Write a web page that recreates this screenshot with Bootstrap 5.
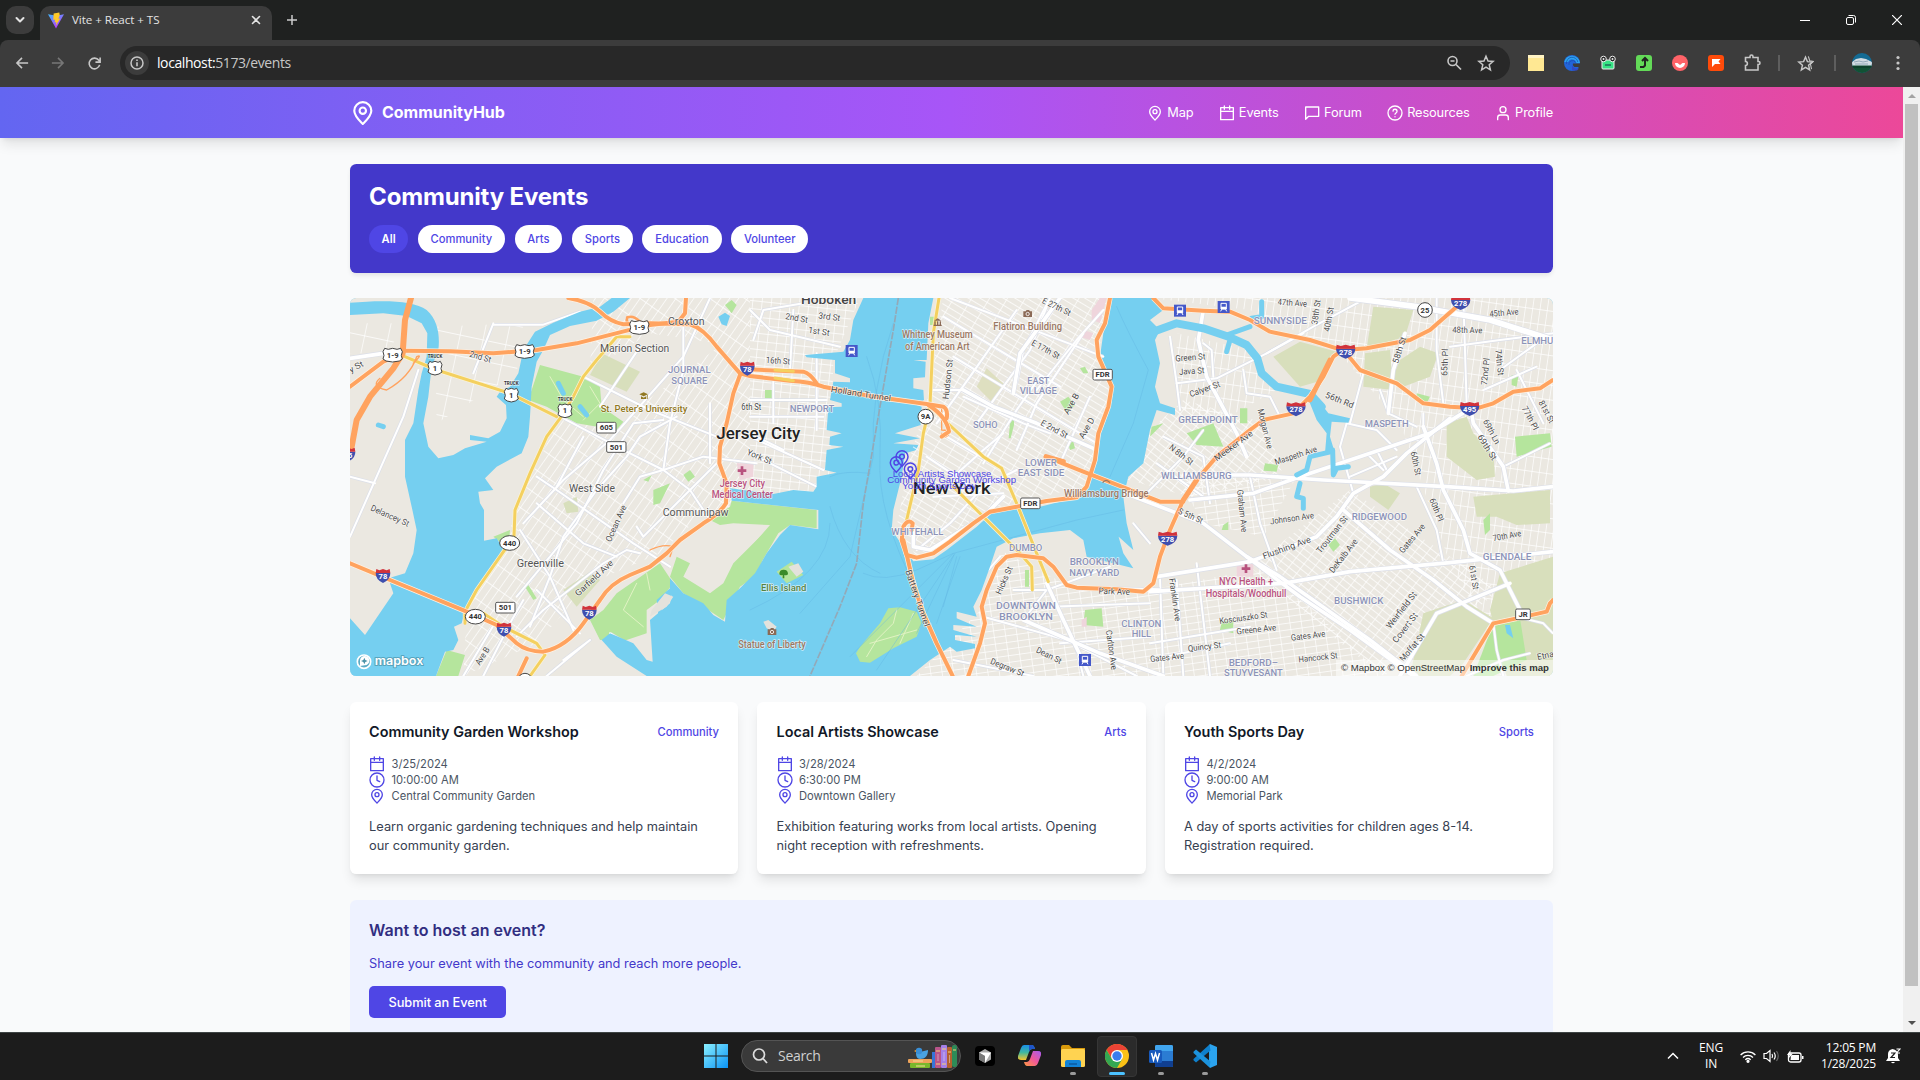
<!DOCTYPE html>
<html lang="en">
<head>
<meta charset="utf-8">
<meta name="viewport" content="width=device-width, initial-scale=1">
<title>Vite + React + TS</title>
<link href="https://cdn.jsdelivr.net/npm/bootstrap@5.3.0/dist/css/bootstrap.min.css" rel="stylesheet">
<style>
  html, body { height: 100%; overflow: hidden; }
  body { font-family: Inter, "Liberation Sans", sans-serif; font-size: 12.8px; background: #1c1c1c; }
  svg { display: block; flex: none; }
  .ln { fill: none; stroke: currentColor; stroke-width: 2; stroke-linecap: round; stroke-linejoin: round; }
  .ln-thin { stroke-width: 1.6; }
  .ui { font-family: "Open Sans", "Noto Sans", sans-serif; }

  /* browser chrome */
  .tabstrip { height: 40px; background: #1f2120; color: #e3e3e3; padding-left: 6px; }
  .tab-menu { width: 28px; height: 28px; border-radius: 10px; background: #3c3c3c; margin-top: 6px; }
  .tab-item { width: 232px; height: 34px; margin: 6px 0 0 6px; padding: 0 10px 6px 8px; background: #3c3c3c; border-radius: 10px 10px 0 0; font-size: 12px; letter-spacing: -.02px; }
  .tab-item span { letter-spacing: -.05px; font-size: 11.6px; }
  .win-btn { width: 46px; height: 40px; }
  .toolbar { height: 47px; background: #3c3c3c; color: #c7c7c7; padding: 6px 4px 7px 4px; border-radius: 8px 8px 0 0; }
  .tool { width: 36px; height: 34px; }
  .omnibox { width: 1390px; height: 34px; margin-left: 8px; background: #282828; border-radius: 17px; font-size: 14px; letter-spacing: -.41px; padding: 0 6px 0 5px; }
  .url { padding-bottom: 2px; }
  .site-info { width: 24px; height: 24px; border-radius: 50%; background: #3c3c3c; margin-right: 8px; }
  .sep { width: 2px; height: 16px; background: #5e5e5e; }

  /* page */
  .viewport { height: 945px; }
  .page { width: 1903px; height: 945px; overflow: hidden; background: #f9fafb; }
  .scrollbar { width: 17px; background: #f0f0f0; }
  .thumb { width: 13px; height: 882px; background: #c1c1c1; }
  .wrap { width: 1203.2px; margin: 0 auto; }
  .topnav { height: 51.2px; color: #fff; background: linear-gradient(to right, #6366f1, #a855f7, #ec4899); box-shadow: 0 8px 12px -2px rgba(0,0,0,.1), 0 3px 5px -3px rgba(0,0,0,.1); position: relative; }
  .brand { font-size: 16px; font-weight: 700; gap: 6.4px; }
  .brand span { margin-top: -2px; }
  .links { gap: 25.6px; }
  .links a { color: #fff; text-decoration: none; gap: 3.8px; font-size: 12.8px; letter-spacing: -.12px; }
  .main-col { padding-top: 25.6px; gap: 25.6px; }
  .banner { background: #4338ca; border-radius: 6.4px; padding: 19.2px; height: 108.8px; box-shadow: 0 3px 5px -1px rgba(0,0,0,.1); }
  .banner h1 { font-size: 24px; line-height: 28.8px; font-weight: 700; color: #fff; margin: 0 0 13.6px; letter-spacing: -.17px; }
  .pills { gap: 9.6px; }
  .pill { font-size: 11.2px; line-height: 15.2px; letter-spacing: .01px; padding: 6.4px 12.8px; border-radius: 20px; background: #fff; color: #4f46e5; border: 0; font-weight: 500; }
  .pill.on { background: #4f46e5; color: #fff; font-weight: 600; width: 39px; padding: 6.4px 0; }
  .map { height: 378px; border-radius: 6.4px; overflow: hidden; background: #75cff0; }
  .events { gap: 19.2px; }
  .event { flex: 1 1 0; background: #fff; border-radius: 6.4px; padding: 19.2px; height: 172.2px; box-shadow: 0 8px 12px -2px rgba(0,0,0,.1), 0 3px 5px -3px rgba(0,0,0,.1); }
  .event h2 { font-size: 14.4px; line-height: 22.4px; font-weight: 600; color: #111827; margin: 0; letter-spacing: -.01px; }
  .tag { font-size: 11.2px; font-weight: 500; color: #4f46e5; letter-spacing: -.02px; }
  .facts { color: #4b5563; font-size: 11.2px; line-height: 16px; margin: 12.600px 0 13px; }
  .facts svg { color: #4f46e5; margin-right: 6.4px; }
  .event p { color: #374151; font-size: 12.8px; line-height: 19.2px; margin: 0; }
  .cta { background: #eef2ff; border-radius: 6.4px; padding: 19.2px; height: 200px; }
  .cta h2 { font-size: 16px; line-height: 23px; font-weight: 600; color: #312e81; margin: 0 0 10.8px; }
  .cta p { font-size: 12.8px; line-height: 22px; color: #4338ca; margin: 0 0 11.4px; }
  .cta button { background: #4f46e5; color: #fff; border: 0; border-radius: 5px; font-size: 12.8px; height: 32px; width: 137px; padding: 1px 0 0; font-weight: 500; letter-spacing: -.05px; }

  /* map text */
  .map text { text-anchor: middle; paint-order: stroke; stroke-linejoin: round; stroke: #fff; stroke-opacity: .7; stroke-width: 4; font-family: Roboto, sans-serif; }
  .map .m-city { fill: #222; font-weight: 500; font-size: 51px; }
  .map .m-town { fill: #555; font-size: 31px; }
  .map .m-hood { fill: #8c93b8; font-size: 29px; font-weight: 500; }
  .map .m-road { fill: #4c4c4c; font-size: 26px; }
  .map .m-tiny { fill: #333; font-size: 17px; font-weight: 700; }
  .map .m-poi { fill: #9a7763; font-size: 30px; font-weight: 500; }
  .map .m-med { fill: #b8527e; font-size: 30px; font-weight: 500; }
  .map .m-edu { fill: #917822; font-size: 29px; font-weight: 500; }
  .map .m-isle { fill: #568142; font-size: 29px; font-weight: 500; }
  .map .m-ev { fill: #4f46e5; font-size: 28px; font-family: "Liberation Sans", sans-serif; stroke: none; }
  .map .m-shield { stroke: none; font-size: 23px; font-weight: 700; fill: #333; }
  .map .m-attr { stroke: none; font-size: 28px; fill: #333; font-family: "Liberation Sans", sans-serif; }

  /* taskbar */
  .taskbar { height: 48px; background: #1c1c1c; border-top: 1px solid #3e4444; color: #fff; position: relative; padding-left: 694px; }
  .t-app { width: 44px; height: 47px; position: relative; }
  .t-app.open::after { content: ""; position: absolute; bottom: 5px; left: 19px; width: 6px; height: 3px; border-radius: 2px; background: #9a9a9a; }
  .t-app.current::after { left: 14px; width: 16px; background: #4cc2ff; }
  .t-app.current::before { content: ""; position: absolute; left: 2px; top: 3px; width: 40px; height: 41px; border-radius: 4px; background: #2b2b2b; border: 1px solid #363636; }
  .t-app svg { position: relative; top: -1px; }
  .t-search { width: 220px; height: 32px; margin: 0 14px 1px 3px; border-radius: 16px; background: #3a3a3a; border: 1px solid #545454; font-size: 14px; letter-spacing: -.3px; color: #d0d0d0; padding: 0 3px 0 10px; }
  .t-search span { padding-bottom: 1px; }
  .tray { margin-left: auto; font-size: 12px; line-height: 16px; letter-spacing: -.2px; padding: 0 19px 1px 0; }
</style>
<script src="https://cdn.jsdelivr.net/npm/bootstrap@5.3.0/dist/js/bootstrap.bundle.min.js"></script>
</head>
<body class="d-flex flex-column">

<svg width="0" height="0" class="position-absolute">
  <defs>
    <symbol id="pin" viewBox="0 0 24 24"><path class="ln" d="M12 22.5c3.5-3.6 8-7.700 8-12.500a8 8 0 1 0-16 0c0 4.800 4.500 8.900 8 12.500z"/><circle class="ln" cx="12" cy="10" r="3"/></symbol>
    <symbol id="cal" viewBox="0 0 24 24"><path class="ln" d="M2.500 4h19v18h-19zM2.500 9.500h19M8 1.500v5M16 1.500v5"/></symbol>
    <symbol id="clock" viewBox="0 0 24 24"><circle class="ln" cx="12" cy="12" r="10.500"/><path class="ln" d="M12 6v6.500l4 2"/></symbol>
    <symbol id="chat" viewBox="0 0 24 24"><path class="ln" d="M22 17H7l-4.500 4.500V3H22z"/></symbol>
    <symbol id="help" viewBox="0 0 24 24"><circle class="ln" cx="12" cy="12" r="10.500"/><path class="ln" d="M9 9.200a3 3 0 0 1 6 .4c0 2-3 2.500-3 4.200M12 17.500v.1"/></symbol>
    <symbol id="user" viewBox="0 0 24 24"><circle class="ln" cx="12" cy="7" r="4.500"/><path class="ln" d="M4 22v-3a4 4 0 0 1 4-4h8a4 4 0 0 1 4 4v3"/></symbol>
    <symbol id="star" viewBox="0 0 24 24"><path d="M12 3l2.700 6.300 6.800.6-5.200 4.500 1.600 6.700L12 17.500l-5.900 3.600 1.600-6.700-5.200-4.500 6.800-.6z" fill="none" stroke="currentColor" stroke-width="2"/></symbol>
  </defs>
</svg>

<div class="tabstrip d-flex ui">
  <div class="tab-menu d-flex align-items-center justify-content-center"><svg width="10" height="10" viewBox="0 0 10 10"><path class="ln" d="M1.500 3L5 6.500 8.500 3"/></svg></div>
  <div class="tab-item d-flex align-items-center">
    <svg width="16" height="18" viewBox="0 0 17 18"><defs><linearGradient id="vg" x1="0" y1="0" x2=".6" y2="1"><stop stop-color="#41b8ff"/><stop offset="1" stop-color="#bd34fe"/></linearGradient></defs><path d="M0 3l8.500 15L17 3l-8 1.500z" fill="url(#vg)"/><path d="M12 1L6 2.200 5.600 9l2-.4-.5 3 1.800-.6-.6 4L13 7.500l-2 .3L12.500 4z" fill="#ffc928"/></svg>
    <span class="ms-2">Vite + React + TS</span>
    <svg class="ms-auto" width="12" height="12" viewBox="0 0 12 12"><path class="ln ln-thin" d="M2.500 2.500l7 7M9.500 2.500l-7 7"/></svg>
  </div>
  <div class="d-flex align-items-center justify-content-center" style="width:40px"><svg width="12" height="12" viewBox="0 0 12 12"><path d="M6 1v10M1 6h10" stroke="#ccc" stroke-width="1.500"/></svg></div>
  <div class="ms-auto d-flex">
    <div class="win-btn d-flex align-items-center justify-content-center"><svg width="10" height="10"><path d="M0 5.500h10" stroke="#fff"/></svg></div>
    <div class="win-btn d-flex align-items-center justify-content-center"><svg width="10" height="10"><rect x=".5" y="2.500" width="7" height="7" rx="1.500" fill="none" stroke="#fff"/><path d="M2.500.500h5a2 2 0 0 1 2 2v5" fill="none" stroke="#fff"/></svg></div>
    <div class="win-btn d-flex align-items-center justify-content-center"><svg width="10" height="10"><path d="M0 0l10 10M10 0L0 10" stroke="#fff" stroke-width="1.200"/></svg></div>
  </div>
</div>
<div style="background:#1f2120">
<div class="toolbar d-flex align-items-center ui">
  <div class="tool d-flex align-items-center justify-content-center"><svg width="14" height="14" viewBox="0 0 16 16"><path d="M15 8H2.500M8 2.200L2.200 8 8 13.800" fill="none" stroke="currentColor" stroke-width="1.800"/></svg></div>
  <div class="tool d-flex align-items-center justify-content-center" style="color:#777"><svg width="14" height="14" viewBox="0 0 16 16"><path d="M1 8h12.500M8 2.200L13.800 8 8 13.800" fill="none" stroke="currentColor" stroke-width="1.800"/></svg></div>
  <div class="tool d-flex align-items-center justify-content-center"><svg width="15" height="15" viewBox="0 0 16 16"><path d="M13.500 9.500A5.700 5.700 0 1 1 12.600 4.600L14 6M14 1.500V6.500H9" fill="none" stroke="currentColor" stroke-width="1.700"/></svg></div>
  <div class="omnibox d-flex align-items-center">
    <div class="site-info d-flex align-items-center justify-content-center"><svg width="14" height="14" viewBox="0 0 14 14"><circle cx="7" cy="7" r="6" fill="none" stroke="currentColor" stroke-width="1.500"/><path d="M7 6.200v4M7 3.500v1.500" stroke="currentColor" stroke-width="1.600"/></svg></div>
    <span class="url"><span class="text-white">localhost:</span>5173/events</span>
    <svg class="ms-auto" width="16" height="16" viewBox="0 0 16 16"><circle cx="6.500" cy="6" r="4.500" fill="none" stroke="currentColor" stroke-width="1.600"/><path d="M10 9.500l5 5M4.500 6h4" stroke="currentColor" stroke-width="1.700"/></svg>
    <svg width="18" height="18" style="margin:0 9px 0 15px"><use href="#star"/></svg>
  </div>
  <div class="d-flex align-items-center" style="margin-left:8px">
    <div class="tool d-flex align-items-center justify-content-center"><svg width="16" height="16"><path d="M0 0h16v16H0z" fill="#ffe893"/><path d="M0 0h16v3H0z" fill="#fff3c4"/></svg></div>
    <div class="tool d-flex align-items-center justify-content-center"><svg width="16" height="16" viewBox="0 0 16 16"><circle cx="8" cy="8" r="8" fill="#2364d8"/><path d="M.2 7A8 8 0 0 1 16 8h-3.500A4.500 4.500 0 0 0 4 7z" fill="#2ba5ee"/><path d="M2.500 9A5.700 5.700 0 0 1 13.800 7M5 10a3.500 3.500 0 0 1 6.500-2.500" fill="none" stroke="#1c4fb4" stroke-width=".8"/><path d="M9 8.500h7.500v3.500H10.500Q8.500 11 9 8.500z" fill="#3c3c3c"/><path d="M8 8.500q0 4 4 5h3l-2 2H8z" fill="#3349c8"/></svg></div>
    <div class="tool d-flex align-items-center justify-content-center"><svg width="16" height="16" viewBox="0 0 16 16"><rect x="2" y="5" width="12" height="9" rx="1" fill="#36e283" stroke="#eee"/><circle cx="3.500" cy="4" r="2.800" fill="#222" stroke="#eee"/><circle cx="12.500" cy="4" r="2.800" fill="#222" stroke="#eee"/><circle cx="3.500" cy="4" r="1" fill="#eee"/><circle cx="12.500" cy="4" r="1" fill="#eee"/><path d="M5 10h6" stroke="#134"/></svg></div>
    <div class="tool d-flex align-items-center justify-content-center"><svg width="16" height="16" viewBox="0 0 16 16"><rect width="16" height="16" rx="3" fill="#63da58"/><path d="M4 12h3.500l1.500-1.500V4M6 6l3-3 3 3" fill="none" stroke="#222" stroke-width="2"/></svg></div>
    <div class="tool d-flex align-items-center justify-content-center"><svg width="16" height="16"><circle cx="8" cy="8" r="8" fill="#ff6368"/><path d="M3 8h2.500l2.500 2 2.500-2H13a5 5 0 0 1-10 0z" fill="#fff"/></svg></div>
    <div class="tool d-flex align-items-center justify-content-center"><svg width="16" height="16"><rect width="16" height="16" rx="3" fill="#ff4b0a"/><path d="M4 4h8.500l-2 2.500 2 2.500H7l-3 3z" fill="#fff"/></svg></div>
    <div class="tool d-flex align-items-center justify-content-center"><svg width="18" height="18" viewBox="0 0 18 18"><path d="M2.500 3.500H7V2.500a1.500 1.500 0 0 1 3 0v1h5v4h.5a1.500 1.500 0 0 1 0 3H15V16H2.500v-4.500c2.500 0 2.500-4 0-4z" fill="none" stroke="currentColor" stroke-width="1.600"/></svg></div>
    <div class="sep" style="margin-left:8px"></div>
    <div class="d-flex" style="width:54px;padding-left:17px"><svg width="17" height="17" viewBox="0 0 24 24"><use href="#star"/><path d="M16 2l2 6 5 1-4 4 1.500 7" fill="none" stroke="currentColor" stroke-width="1.500"/></svg></div>
    <div class="sep"></div>
    <svg width="20" height="20" style="margin-left:16px"><defs><clipPath id="av"><circle cx="10" cy="10" r="10"/></clipPath></defs><g clip-path="url(#av)"><path d="M0 0h20v20H0z" fill="#146b94"/><path d="M0 9l4-3 5-1 5 1 6 3v4H0z" fill="#d3dde3"/><path d="M2 9l5-1 4 1 5-1M3 11h13" stroke="#94aab8" fill="none"/><path d="M0 12.500h20V20H0z" fill="#125234"/><path d="M0 14h20" stroke="#0b3424"/></g></svg>
    <svg width="4" height="16" style="margin-left:24px" fill="currentColor"><circle cx="2" cy="2.500" r="1.600"/><circle cx="2" cy="8" r="1.600"/><circle cx="2" cy="13.500" r="1.600"/></svg>
  </div>
</div>
</div>

<div class="viewport d-flex">
  <div class="page">
    <nav class="topnav">
      <div class="wrap h-100 d-flex align-items-center justify-content-between">
        <div class="brand d-flex align-items-center"><svg width="25.600" height="25.600"><use href="#pin"/></svg><span>CommunityHub</span></div>
        <div class="links d-flex">
          <a href="#" class="d-flex align-items-center"><svg width="16" height="16"><use href="#pin"/></svg>Map</a>
          <a href="#" class="d-flex align-items-center"><svg width="16" height="16"><use href="#cal"/></svg>Events</a>
          <a href="#" class="d-flex align-items-center"><svg width="16" height="16"><use href="#chat"/></svg>Forum</a>
          <a href="#" class="d-flex align-items-center"><svg width="16" height="16"><use href="#help"/></svg>Resources</a>
          <a href="#" class="d-flex align-items-center"><svg width="16" height="16"><use href="#user"/></svg>Profile</a>
        </div>
      </div>
    </nav>
    <main class="wrap main-col d-flex flex-column">
      <section class="banner">
        <h1>Community Events</h1>
        <div class="pills d-flex">
          <button class="pill on">All</button><button class="pill">Community</button><button class="pill">Arts</button><button class="pill">Sports</button><button class="pill">Education</button><button class="pill">Volunteer</button>
        </div>
      </section>
      <section class="map">
        <svg id="citymap" width="1203.200" height="378" viewBox="0 24 3609.600 1134" preserveAspectRatio="none"></svg>
      </section>
      <section class="events d-flex">
        <article class="event">
          <div class="d-flex justify-content-between align-items-center"><h2>Community Garden Workshop</h2><span class="tag">Community</span></div>
          <div class="facts">
            <div class="d-flex"><svg width="16" height="16"><use href="#cal"/></svg>3/25/2024</div>
            <div class="d-flex"><svg width="16" height="16"><use href="#clock"/></svg>10:00:00 AM</div>
            <div class="d-flex"><svg width="16" height="16"><use href="#pin"/></svg>Central Community Garden</div>
          </div>
          <p>Learn organic gardening techniques and help maintain our community garden.</p>
        </article>
        <article class="event">
          <div class="d-flex justify-content-between align-items-center"><h2>Local Artists Showcase</h2><span class="tag">Arts</span></div>
          <div class="facts">
            <div class="d-flex"><svg width="16" height="16"><use href="#cal"/></svg>3/28/2024</div>
            <div class="d-flex"><svg width="16" height="16"><use href="#clock"/></svg>6:30:00 PM</div>
            <div class="d-flex"><svg width="16" height="16"><use href="#pin"/></svg>Downtown Gallery</div>
          </div>
          <p>Exhibition featuring works from local artists. Opening night reception with refreshments.</p>
        </article>
        <article class="event">
          <div class="d-flex justify-content-between align-items-center"><h2>Youth Sports Day</h2><span class="tag">Sports</span></div>
          <div class="facts">
            <div class="d-flex"><svg width="16" height="16"><use href="#cal"/></svg>4/2/2024</div>
            <div class="d-flex"><svg width="16" height="16"><use href="#clock"/></svg>9:00:00 AM</div>
            <div class="d-flex"><svg width="16" height="16"><use href="#pin"/></svg>Memorial Park</div>
          </div>
          <p>A day of sports activities for children ages 8-14. Registration required.</p>
        </article>
      </section>
      <section class="cta">
        <h2>Want to host an event?</h2>
        <p>Share your event with the community and reach more people.</p>
        <button>Submit an Event</button>
      </section>
    </main>
  </div>
  <div class="scrollbar d-flex flex-column align-items-center">
    <svg width="17" height="17"><path d="M5 11h8L9 7z" fill="#a3a3a3"/></svg>
    <div class="thumb"></div>
    <svg class="mt-auto" width="17" height="17"><path d="M5 6h8L9 10z" fill="#505050"/></svg>
  </div>
</div>

<div class="taskbar d-flex align-items-center ui">
  <div class="t-app d-flex align-items-center justify-content-center"><svg width="24" height="24" viewBox="0 0 24 24"><defs><linearGradient id="wg" x1="0" y1="0" x2="1" y2="1"><stop stop-color="#8af0ff"/><stop offset="1" stop-color="#0a93f5"/></linearGradient></defs><path d="M0 0h11.500v11.500H0zM12.500 0H24v11.500H12.500zM0 12.500h11.500V24H0zM12.500 12.500H24V24H12.500z" fill="url(#wg)"/></svg></div>
  <div class="t-search d-flex align-items-center">
    <svg width="16" height="16" viewBox="0 0 16 16"><circle cx="7" cy="6.500" r="5.500" fill="none" stroke="#ddd" stroke-width="1.700"/><path d="M11 10.500l4 4.500" stroke="#ddd" stroke-width="1.800"/></svg>
    <span style="margin-left:10px">Search</span>
    <svg class="ms-auto" width="49" height="24" viewBox="0 0 49 24"><rect x="0" y="15" width="24" height="4" rx="1" fill="#efa45a"/><rect x="2" y="19" width="20" height="5" rx="1" fill="#7ab82c"/><path d="M5 17h10M8 22h9" stroke="#f9dd9a"/><path d="M8 9l4-1 8-2c0 6-3 9-8 9-3 0-4-3-4-6z" fill="#4aa3e0"/><circle cx="11" cy="7" r="3.200" fill="#3a8fd6"/><path d="M8 6l-2 1 2 1z" fill="#f4a030"/><rect x="24" y="8" width="3" height="16" fill="#3575d8"/><rect x="27" y="3" width="6" height="21" rx="1" fill="#b9558a"/><rect x="33" y="1" width="6" height="23" rx="1" fill="#a480e8"/><rect x="39" y="3" width="5" height="21" rx="1" fill="#b5602f"/><rect x="44" y="1" width="5" height="22" rx="2" fill="#2e8b57"/><path d="M28 7h4M34 5h4M40 8h3M28 20h4M34 20h4M45 6h3" stroke="#f5d276"/><path d="M30 10v7M36 8v9M41.500 11v8" stroke="#fff" stroke-opacity=".4"/></svg>
  </div>
  <div class="d-flex">
  <div class="t-app d-flex align-items-center justify-content-center" style="width:20px"><svg width="20" height="20" viewBox="0 0 20 20"><rect width="20" height="20" rx="4" fill="#000"/><path d="M10 3l6 3.500v7L10 17l-6-3.500v-7z" fill="#aaa"/><path d="M4 6.500h12L10 17V10z" fill="#fff"/><path d="M4 6.500L10 10v7l-6-3.500z" fill="#777"/></svg></div>
  <div class="t-app d-flex align-items-center justify-content-center" style="margin-left:12px"><svg width="23" height="21" viewBox="0 0 23 21"><defs><linearGradient id="c1" x1="0" y1="0" x2="0" y2="1"><stop stop-color="#1a8fe8"/><stop offset=".5" stop-color="#3fb8a0"/><stop offset="1" stop-color="#f7c52b"/></linearGradient><linearGradient id="c2" x1="1" y1="0" x2="0" y2="1"><stop stop-color="#a65bf0"/><stop offset=".5" stop-color="#f0579a"/><stop offset="1" stop-color="#ff9b3d"/></linearGradient></defs><path d="M6 0h8q2 0 3 4h-3q-2 0-3 3L8 15H3q-4 0-3-4L3 3q1-3 3-3z" fill="url(#c1)"/><path d="M11 0h3q2 0 3 4h-3q-2 0-3 3z" fill="#1f55c8"/><path d="M17 21H9q-2 0-3-4h3q2 0 3-3l3-8h5q4 0 3 4l-3 8q-1 3-3 3z" fill="url(#c2)"/></svg></div>
  <div class="t-app open d-flex align-items-center justify-content-center"><svg width="24" height="22" viewBox="0 0 24 22"><path d="M0 2q0-2 2-2h6l3 3h13v6H0z" fill="#d99a0b"/><rect y="4" width="24" height="18" rx="1.500" fill="#ffd351"/><path d="M4 22v-5q0-2 2-2h12q2 0 2 2v5z" fill="#1283d6"/><path d="M8 19h8" stroke="#0c5aa0" stroke-width="1.500"/></svg></div>
  <div class="t-app open current d-flex align-items-center justify-content-center"><svg width="24" height="24" viewBox="0 0 24 24"><circle cx="12" cy="12" r="12" fill="#fbc116"/><path d="M1.600 6A12 12 0 0 1 22.400 6H12L7 15z" fill="#ea4335"/><path d="M1.600 6A12 12 0 0 0 12 24l5.200-9-10.400 0z" fill="#34a853"/><circle cx="12" cy="12" r="6" fill="#fff"/><circle cx="12" cy="12" r="4.700" fill="#3b7ded"/></svg></div>
  <div class="t-app open d-flex align-items-center justify-content-center"><svg width="24" height="22" viewBox="0 0 24 22"><rect x="6" width="18" height="22" rx="1.500" fill="#2b7cd3"/><path d="M6 1.500Q6 0 7.500 0h15Q24 0 24 1.500V6H6z" fill="#41a5ee"/><path d="M6 16h18v4.500q0 1.500-1.500 1.500h-15Q6 22 6 20.500z" fill="#103f91"/><rect y="5" width="13" height="13" rx="1.500" fill="#185abd"/><path d="M2.500 8l2 7 2-6.500 2 6.500 2-7" fill="none" stroke="#fff" stroke-width="1.500"/></svg></div>
  <div class="t-app open d-flex align-items-center justify-content-center"><svg width="24" height="24" viewBox="0 0 24 24"><path d="M17 0l7 3v18l-7 3-1-1.500V1z" fill="#2ba3ee"/><path d="M17.500 6.500L3 18.500l-2.500-2.200 0-1.300L16.500.500z" fill="#0f80cc"/><path d="M17.500 17.500L3 5.500.500 7.700 .5 9l16 14.500z" fill="#1c93dd"/></svg></div>
  </div>
  <div class="tray d-flex align-items-center">
    <svg width="12" height="8" viewBox="0 0 12 8" style="margin-right:20px"><path d="M1 6.500l5-5 5 5" fill="none" stroke="#fff" stroke-width="1.500"/></svg>
    <div class="text-center" style="width:24px;margin-right:17px">ENG<br>IN</div>
    <svg width="16" height="13" viewBox="0 0 16 13" fill="none" stroke="#fff" stroke-width="1.300"><path d="M.6 5a10.500 10.500 0 0 1 14.800 0M3 7.500a7 7 0 0 1 10 0M5.300 9.700a4 4 0 0 1 5.400 0"/><circle cx="8" cy="11.300" r="1" fill="#fff"/></svg>
    <svg width="17" height="14" viewBox="0 0 17 14" fill="none" stroke="#fff" stroke-width="1.200" style="margin-left:7px"><path d="M1 4.500h2.500L7 1.500v11L3.500 9.500H1zM9 5q1.200 2 0 4M11 3.500q2.500 3.500 0 7"/><path d="M13.500 2q3.500 5 0 10" stroke="#666"/></svg>
    <svg width="17" height="13" viewBox="0 0 17 13" style="margin-left:7px"><rect x="1.500" y="3" width="12.500" height="9" rx="2" fill="none" stroke="#fff" stroke-width="1.300"/><path d="M4 5h8v5H3.500zM15 6h1.500v3H15zM3.500 0L0 5h2.500L1 9l5-5.500H3.500z" fill="#fff"/></svg>
    <div class="text-end" style="width:72px;margin-right:10px">12:05 PM<br>1/28/2025</div>
    <svg width="15" height="16" viewBox="0 0 15 16"><path d="M0 13l2-3V6q0-4 4.500-5Q12 2 12 7v3l2 3zM5 14h4q-2 2.500-4 0z" fill="#fff"/><path d="M5 5h4L5 9.500h4" fill="none" stroke="#1c1c1c" stroke-width="1.200"/><path d="M10.500 1h3.500l-3.500 4H14" fill="none" stroke="#fff" stroke-width="1.100"/></svg>
  </div>
</div>

<script>
(function () {
  var out = [];
  // street grids: id, rotation, block width, block height
  var grids = [['gJ', 35, 22, 60], ['gD', 6, 28, 24], ['gM', 31, 46, 18], ['gB', -8, 34, 20], ['gW', 38, 30, 18], ['gQ', 8, 22, 44], ['gN', 12, 70, 62]];
  out.push('<defs>');
  grids.forEach(function (g) {
    out.push('<pattern id="' + g[0] + '" width="' + g[2] + '" height="' + g[3] + '" patternUnits="userSpaceOnUse" patternTransform="rotate(' + g[1] + ')"><path d="M0 0H' + g[2] + 'M0 0V' + g[3] + '" stroke="#fff" stroke-width="4" fill="none"/></pattern>');
  });
  out.push('</defs><rect y="24" width="3610" height="1134" fill="#ebe8e1"/>');
  function area(fill, d) { out.push('<path d="' + d + '" fill="' + fill + '"/>'); }
  function road(col, w, list, casing) {
    if (casing) list.forEach(function (d) { out.push('<path d="M' + d + '" fill="none" stroke="' + casing + '" stroke-width="' + (w + 4) + '" stroke-linejoin="round"/>'); });
    list.forEach(function (d) { out.push('<path d="M' + d + '" fill="none" stroke="' + col + '" stroke-width="' + w + '" stroke-linejoin="round" stroke-linecap="round"/>'); });
  }
  // land with street texture
  area('url(#gN)', 'M0 100L150 100 120 190 0 190ZM255 110L520 100 500 250 260 400Z');
  area('url(#gJ)', 'M640 390L800 400 1200 100 1200 640 1050 680 930 790 720 880 560 1060 340 1158 350 960 460 790 500 650 620 400Z M730 24H1200V230L1100 160 900 130 720 240Z');
  area('url(#gD)', 'M1200 24H1530L1450 210 1440 600 1200 620Z');
  area('url(#gW)', 'M2400 420L2500 330 2750 400 2800 560 2520 620 2300 560ZM2700 830L3000 600 3300 800 3450 900 3200 1100 3100 1158 2960 1050Z');
  area('url(#gB)', 'M1950 780L2180 900 2400 900 2750 830 3100 1158H1700L1900 950ZM2480 560H2840L2740 740 2560 700Z');
  area('url(#gQ)', 'M2400 24H3610V1158H3450L3400 1000 3300 820 3150 400 2960 180 2700 60ZM2480 130L2700 180 2780 300 2600 400 2480 350Z');

  // cemeteries and muted greens
  ['M2770 200L2850 155 2960 185 2920 270 2850 290Z', 'M3070 50L3190 60 3165 140 3050 175ZM3045 190L3120 180 3130 300 3040 290Z', 'M3150 210L3210 170 3265 190 3240 260 3160 290 3120 280Z', 'M3290 400L3350 380 3370 430 3430 490 3435 560 3380 570 3290 500Z', 'M3370 620L3600 600 3600 700 3500 705 3440 680 3380 680Z', 'M3060 590L3100 580 3150 610 3115 660 3060 620Z', 'M3450 850L3610 800V1158H3470L3420 960ZM3220 970L3340 930 3430 985 3340 1120 3300 1158H3180Z', 'M755 190L870 245 830 305 720 255Z', 'M640 640L680 620 685 665 650 670ZM640 900L720 845 750 870 680 950Z', 'M1910 240L1960 290 1930 330 1880 290Z'].forEach(function (d) { area('#d8dfbc', d); });
  // parks
  ['M570 225L700 260 750 290 755 350 820 395 800 420 680 400 590 350 535 330 555 270Z', 'M1230 850L1170 890 1120 990 1000 910 960 860 980 800 1020 820 1000 860 1080 910 1120 880 1150 820 1250 720Z', 'M1145 632L1400 660 1400 715 1320 705 1285 730 1215 850 1170 870 1160 820 1260 705 1150 700 1110 705 1080 690 1140 650Z', 'M800 910L930 820 970 880 930 930 890 960 890 1030 830 1050 750 1050 720 990 760 960Z', 'M290 1080L345 1095 325 1158H258ZM430 740L480 720 475 775Z', 'M3430 1000L3510 985 3530 1110 3430 1158H3370Z', 'M3495 440L3600 430 3605 470 3500 500Z', 'M2510 430L2590 400 2620 470 2540 465ZM2405 410L2440 400 2400 440Z', 'M2670 355h22v45h-22zM2745 520l40 5-5 20-40-3z', 'M2205 960L2255 955 2260 1010 2200 1005Z', 'M3200 310l40 10-10 20-30-15ZM3400 690l20-20v50l-15 15z', 'M2615 995l35-5v40l-40-10zM2620 705l15-10v25h-20zM2935 765l20-20 15 20-20 20zM3485 255l20 5-5 30-15-5z', 'M910 600l50-20-30 60-20 5zM1000 555l20-15 15 20-20 15z', 'M525 890l10-5 25 40-10 5zM880 570l25-15-10 20z', 'M1125 45l20-15 15 15-15 25zM1245 300h25v25h-25z'].forEach(function (d) { area('#b5e59d', d); });
  // hospital and civic pinks
  ['M1160 520h50v40l-40 10zM2660 820h50v40h-50z', 'M2195 990l15-10v30h-15z'].forEach(function (d) { area('#efd5dc', d); });

  // minor white streets
  road('#fff', 6, ['0 560L75 580', '205 240L160 380 0 740', '430 100L370 250', '430 104H580L690 65', '560 640L700 760 800 800', '500 920L600 800 680 700 760 540 850 400 940 390', '540 1010L600 860 640 740 740 600 830 500 870 440 980 380', '520 700L640 570 780 450 1000 200 1080 24', '560 560L620 600 850 760 960 830', '700 260L900 360 1100 440', '620 590L700 440', '500 1040L580 960 760 820 830 780 870 790', '400 1158L480 1000 520 930', '340 1158L440 990', '860 710L880 740 1100 520', '1000 60V240L960 400 940 540', '640 385L840 490 940 540 1020 600 1080 690', '940 540L870 560 820 640', '940 540L1060 500 1220 520', '1200 430L1300 480', '510 720L600 860 670 1020', '590 1158L720 1050 640 1110', '830 1060L780 1030', '1080 520V340', '750 350L870 170', '560 900L640 980 690 1030', '1210 150L1240 60 1360 40', '1200 60L1260 120 1470 170', '1270 270V400M1400 190V420M1330 60L1320 240M1200 330H1430M1200 380H1420M1200 440L1420 540M1200 490L1400 590', '2350 700L2400 760M2350 600L2400 640M2420 520L2560 620M2380 620L2500 500 2560 420', '1900 980L2150 1050 2360 1158', '1810 1110L2050 1158M1880 880L1950 800', '2020 990L2090 900 2280 830', '1990 900H2100L2180 1080 2200 1158', '2100 950L2400 940M2130 1060L2400 1040', '2460 140L2480 280 2490 360', '2480 280L2600 265 2750 190 2860 130', '2680 240L2690 310 2760 320 2790 380', '2560 160L2585 180 2590 260', '2440 440L2560 500 2580 640', '2430 860L2440 1158M2540 820L2580 1158M2480 870L2500 1158', '2400 1060L2700 1010M2400 1110L2640 1060', '2700 560L2730 700 2780 840', '3000 560L3140 500M2990 400L3080 420 3140 480', '3050 24L2890 110 2750 190', '2990 400L2970 470 2990 540', '3200 590L3260 720 3280 820', '3220 410V370M3260 24V180L3280 340M3340 24L3350 340', '3300 170L3450 150 3609 130', '3450 240L3560 160 3609 140M3500 240L3580 400', '2990 540L3010 610', '3400 300L3560 230M3460 530L3600 460', '3350 1158L3460 1110 3540 1090', '3430 1000L3440 1080 3460 1158', '3500 980L3580 1000 3609 1030', '3040 250L3000 400M3090 300L3115 370 3200 410', '3050 490L3100 540M3080 480L3110 540'], '#dcdfe8');
  // main white avenues
  road('#fff', 11, ['0 205L100 190 158 185', '2520 630L2710 610 2850 560 3000 510 3240 430 3370 350', '2500 555L2700 555 2920 570 3290 590 3490 603 3609 590', '2420 860L2700 815 2900 740 2960 680 3010 610 3100 560 3170 490 3300 385', '2400 905L2800 880 3000 845 3300 818 3609 785', '2300 600L2560 700 2690 800 2850 920 3000 1020 3190 1158', '2690 800L2790 860 3060 1050 3200 1158', '2980 660L3120 780 3250 870 3350 950 3430 1000', '3360 340L3370 400 3460 530 3475 603', '3220 410L3260 520 3280 600 3340 720 3360 790 3450 840 3510 960', '3165 130L3130 240 3115 370', '2560 60L2545 150 2570 260 2660 430 2690 500', '3150 1158L3260 970 3480 880', '2090 880L2140 990 2220 1158', '2020 990L2250 1090 2440 1158', '2180 895L2430 900'], '#dcdfe8');
  road('#fff', 17, ['3000 24L3200 50 3420 90 3609 150'], '#dcdfe8');

  // water
  var W = '#75cff0';
  area(W, 'M0 38C100 30 190 30 230 60 265 90 270 140 265 180L245 230 235 320 220 400 235 470 265 505 310 495 345 475 410 455 360 450V435L415 445 450 425 470 385 468 345 440 320 450 305 480 290 505 250 520 180 555 125 610 98 690 65 750 50 785 24H840L790 65 740 92 660 108 600 135 580 180 560 215 545 290 540 380 535 440 515 490 440 530 405 565 430 600 385 605 390 640 402 660V752L440 745 465 785 410 860 350 945 335 1000 312 1010 325 1050 310 1080 285 1085 258 1158H0V985L45 1035 130 910 115 865 165 850 190 790 200 720 185 650 165 560V450L190 400 205 300 215 250 230 200 232 130 215 100 170 78 100 70 0 75Z');
  area(W, 'M1540 24L1510 90 1500 150 1480 185 1365 195 1370 202 1455 210V250L1500 265 1500 277 1450 275 1440 330 1475 340V350L1435 352 1430 420 1475 430 1440 440 1438 465 1480 470 1430 480 1425 540 1460 548 1400 560 1400 590 1390 605 1330 600 1270 612 1140 595 1145 632 1405 660V718L1320 705 1290 735 1250 790 1215 850 1170 895 1130 930 1125 995 1090 975 1060 940 1000 910 960 865V895L920 930 925 975 965 915 960 940 900 990 908 1115 890 1110 850 1060 780 1030 755 1050 800 1100 890 1158H1680L1740 1110 1800 1070 1820 1085 1875 1075 1875 1062 1815 1050V1035L1880 1040 1810 1020V1005L1880 1010 1820 985V965L1880 980 1870 950 1895 900 1920 830 1940 770 1990 745 2070 730 2160 720 2200 750 2210 800 2290 820 2350 835 2320 790 2300 720 2240 680 2350 780 2330 700 2320 620 2335 560 2380 520 2400 420 2420 360 2475 375V355L2430 340 2415 290 2430 220 2415 150 2430 120 2400 90 2440 60 2410 24Z');
  // Manhattan
  area('#ebe8e1', 'M1750 24H2282L2260 130 2250 200 2288 290 2275 370 2252 430 2240 510 2215 590 2190 620 2070 650 1930 665 1880 710 1790 780 1750 808 1690 814 1660 770 1625 720 1630 660 1645 600 1655 560 1665 490 1700 480 1705 465 1630 460 1710 445 1635 430 1712 405 1715 350 1700 345 1722 330 1720 300 1690 295V265L1725 262 1727 215 1690 210H1730L1735 100Z');
  area('url(#gM)', 'M1780 24H2270L2245 200 2278 290 2240 500 2200 590 1930 655 1790 770 1700 800 1640 710 1680 500 1730 340Z');
  area('#dedfc0', 'M1910 235L1965 285 1925 335 1880 290Z');
  area('#efd5dc', 'M2225 60l25-36h20l-20 75-25-10zM2200 120l30 10-10 20-30-10z');
  area('#b5e59d', 'M2130 335l25-15 20 25-25 22zM1740 80h12v25h-12zM2155 460l15-5 5 20-15 5zM2190 235l15-5 10 20-15 0zM2025 840h12v50h-12zM1980 400l12-20v25l-10 40h-6z');
  road('#fff', 6, ['1780 80L2130 290M1810 200L2240 460M1740 300H1840', '1840 320L2020 400 2100 430', '1760 400L1860 260 2000 60', '1880 400L2040 180 2090 50', '2000 280L2020 180 2100 24M2060 300L2180 150 2260 60', '1900 520L2000 360 2070 260', '1810 560L1900 480 1960 430', '2000 480L2060 340 2200 130', '1700 780L1800 700 1900 590 2000 540', '1730 500L1880 600M1750 620L1960 610', '1800 24L2260 200M2130 520L2220 320M1790 440L1960 540'], '#e2e4ec');
  road('#fff', 11, ['1840 300L1930 350 2060 400 2230 475', '1690 720V770L1740 780 1900 680 1960 620', '1990 310L2010 190 2130 24'], '#dcdfe8');
  // islands
  area('#b5e59d', 'M1615 955L1650 952 1700 965 1715 1000 1700 1040 1630 1075 1560 1118 1530 1115 1518 1090 1530 1070 1590 1000Z M1280 845L1325 815 1360 855 1310 880Z');
  area('#e4e2dc', 'M1315 830l30-10 15 25-20 15zM1240 995l15-5 25 20-10 15-20-10zM905 960l40-50 25 10-20 30-50 30z');
  road('#e2f2c4', 3, ['1640 960L1630 1000 1580 1050 1550 1100M1690 970L1650 1060M1560 1060L1700 1020', '600 260L640 330 700 380M720 290L750 340 700 390', '860 880L820 960 880 1010M890 850L900 900']);
  // creeks and basins
  road(W, 24, ['2410 125L2480 100 2560 115 2640 142 2690 165 2722 205 2735 250 2780 290 2880 312 2915 350']);
  area(W, 'M2870 315L2905 330 2935 370 3000 385 2995 398 2945 395 2940 440 2955 490 2925 490 2930 430 2900 390Z');
  road(W, 15, ['2945 485L2880 500 2870 540 2840 555', '2948 480L2950 555 2960 535 2995 530', '2850 580L2840 620 2860 625V655', '2630 135L2700 110', '2640 150L2630 185', '2705 85L2735 80 2735 35', '625 280L640 310', '690 350L710 375', '85 405L100 410']);
  area(W, 'M3465 1005l15 0 10 40-20-15zM1105 80l20-12 15 10-10 30-15-5z');
  // ferry routes and the state line
  road('#62b6e3', 1.3, ['1550 200Q1600 330 1590 500T1700 900', '1560 550Q1480 540 1440 560M1590 850Q1480 800 1440 650', '1540 850Q1600 880 1700 840L1810 790 2180 690 2320 660', '1810 790L1500 1100M1815 790L1580 1140M1812 795L1700 1030', '1630 100Q1560 300 1570 500L1500 800 1350 970', '2300 50Q2330 120 2395 240L2350 400 2280 560', '1440 700Q1440 850 1200 960', '1830 800L1760 1000M1820 800L1780 950'], null);
  out.push('<path d="M1645 24L1630 120 1590 350 1540 640 1520 820 1470 950 1380 1158" fill="none" stroke="#93a9b8" stroke-width="5" stroke-dasharray="22 4"/>');

  // highways
  road('#f4d05f', 9, ['165 200L260 240 480 310 620 380', '840 140L800 140 740 210 700 260 670 320 630 385 590 440 540 550 495 660 492 740 450 800 380 900 345 965 345 1000', '400 970L460 1010 560 1060 585 1095 540 1158', '1735 345L1900 500 1955 535 2000 640 2060 790 2095 875', '1767 24L1750 130 1740 345 1720 430 1705 540 1670 690', '1810 590L1880 660 2010 790 2045 830 2047 900'], '#fbf4d8');
  road('#ffa35f', 4, ['90 265Q60 290 110 300Q180 260 200 200Q220 190 190 220', '1775 350V420Q1800 420 1795 435Q1780 450 1775 430', '900 780Q940 760 970 770L960 800']);
  road('#ffa35f', 8, ['870 95Q850 75 832 82 825 98 845 108']);
  road('#ffa35f', 12, ['160 182L300 184 430 190 560 180 680 160 830 122 900 105 985 95 1005 70 1008 24', '655 24Q720 35 750 65T820 103L900 100 1020 103Q1060 115 1100 170L1170 250 1200 258 1320 272Q1380 275 1420 290L1560 318 1730 342 1780 350Q1795 360 1790 385', '1195 238L1360 245Q1380 250 1400 280', '1170 255L1150 310 1130 400 1110 470 1108 520 1130 580 1128 640Q1110 670 1060 700L990 750 950 790 900 830 840 855Q780 880 750 930L700 1000Q650 1070 580 1085 530 1085 500 1060L440 1005 350 965 120 870 0 820', '0 290L100 215 158 190', '1735 345Q1790 380 1797 425L1775 440', '530 1105L505 1158', '2280 24L2265 100 2240 150 2245 200 2285 290 2275 350 2245 430 2235 510 2210 590 2180 622 2090 633 2000 650 1920 665 1870 700 1800 755 1750 790 1700 803 1670 795 1655 750 1660 710Q1675 685 1688 700L1685 720', '1660 750L1690 880 1720 970 1760 1060 1808 1158', '2125 515L2200 545 2290 580 2430 635 2500 635', '1855 1158L1890 1060 1905 1000 1895 950 1910 900 1940 830 1970 800 2000 795 2080 805 2110 830 2150 885 2180 893 2300 898 2380 905 2410 880 2430 800 2460 720 2500 630 2540 570 2600 500 2700 420 2740 390 2830 370 2880 320 2920 260 2950 200 2985 175', '2410 24L2440 55 2560 62 2640 65 2700 90 2760 125 2880 150 2960 175 2985 185 3030 240 3140 280 3220 340 3300 350 3380 355 3430 340 3490 305 3570 295 3609 270', '2985 180L3050 175 3180 150 3240 120 3320 50 3335 24', '3335 1158L3430 1000 3500 985 3590 965 3600 940 3609 930'], '#fff1e2');
  road('#ffa35f', 18, ['183 24L165 90 158 190 130 235 60 320 20 390 5 470']);
  road('#ffa35f', 15, ['2088 500L2140 515M2500 630L2540 570', '2880 330L2940 210']);
  road('#f4d05f', 9, ['1275 240L1330 244M1275 264L1330 272']);

  function label(c, t, x, y, w, r) {
    out.push('<text class="m-' + c + '" x="' + x + '" y="' + y + '" dy=".35em"' + (w ? ' textLength="' + w + '" lengthAdjust="spacingAndGlyphs"' : '') + (r ? ' transform="rotate(' + r + ' ' + x + ' ' + y + ')"' : '') + '>' + t + '</text>');
  }
  [['2nd St', 391, 200, 66, 16], ['y St', 18, 230, 46, -28], ['Delancey St', 120, 677, 124, 24], ['Ocean Ave', 798, 700, 118, -66], ['Garfield Ave', 732, 864, 146, -43], ['Ave B', 397, 1098, 58, -58],
   ['6th St', 1204, 351, 60, 0], ['York St', 1228, 500, 78, 22], ['2nd St', 1340, 84, 68, 10], ['3rd St', 1438, 80, 66, 8], ['1st St', 1407, 124, 64, 8], ['16th St', 1284, 212, 72, 4],
   ['Holland Tunnel', 1533, 311, 182, 9], ['Hudson St', 1793, 268, 120, -84], ['E 27th St', 2120, 50, 92, 26], ['E 17th St', 2087, 178, 92, 28], ['E 2nd St', 2113, 417, 88, 28], ['Ave B', 2164, 341, 68, -60], ['Ave D', 2210, 414, 68, -60],
   ['Battery Tunnel', 1703, 924, 178, 71], ['Hicks St', 1962, 871, 88, -66], ['Park Ave', 2293, 904, 94, 2], ['Dean St', 2097, 1096, 82, 26], ['Degraw St', 1972, 1132, 106, 22], ['Carlton Ave', 2285, 1080, 120, 82],
   ['47th Ave', 2827, 38, 88, 4], ['38th St', 2898, 66, 74, -82], ['40th St', 2936, 88, 74, -80], ['58th St', 3148, 180, 82, -72], ['65th Pl', 3284, 217, 82, -88], ['72nd Pl', 3406, 245, 82, -84], ['74th St', 3449, 217, 78, 84], ['45th Ave', 3462, 68, 88, -5], ['48th Ave', 3352, 120, 90, 1],
   ['Green St', 2521, 202, 90, -4], ['Java St', 2525, 243, 76, -4], ['Calyer St', 2564, 297, 96, -20], ['56th Rd', 2969, 330, 90, 22], ['Morgan Ave', 2746, 416, 122, 76], ['Meeker Ave', 2650, 467, 136, -36], ['Maspeth Ave', 2837, 496, 132, -18], ['N 8th St', 2494, 494, 84, 38], ['S 5th St', 2522, 677, 78, 24],
   ['Graham Ave', 2677, 663, 128, 84], ['Johnson Ave', 2826, 685, 132, -8], ['Flushing Ave', 2810, 773, 152, -20], ['Troutman St', 2946, 733, 134, -52], ['DeKalb Ave', 2980, 797, 122, -52], ['Gates Ave', 3186, 745, 106, -50], ['60th St', 3198, 520, 72, 78], ['60th Pl', 3260, 659, 72, 68], ['69th Ln', 3425, 425, 80, 62], ['69th St', 3412, 472, 86, 58], ['77th Pl', 3541, 384, 78, 62], ['81st St', 3590, 365, 72, 62], ['70th Ave', 3471, 737, 86, -11], ['61st St', 3372, 862, 72, 80],
   ['Franklin Ave', 2475, 929, 130, 82], ['Kosciuszko St', 2680, 983, 146, -8], ['Greene Ave', 2719, 1018, 120, -6], ['Gates Ave', 2874, 1037, 104, -7], ['Quincy St', 2563, 1070, 100, -7], ['Gates Ave', 2451, 1102, 102, -6], ['Hancock St', 2904, 1102, 118, -6], ['Weirfield St', 3154, 960, 132, -52], ['Covert St', 3165, 1013, 106, -52], ['Moffat St', 3186, 1072, 100, -50], ['Etna', 3586, 1096, 50, -12]
  ].forEach(function (a) { label('road', a[0], a[1], a[2], a[3], a[4]); });
  [['Croxton', 1009, 94, 110], ['Marion Section', 854, 175, 208], ['West Side', 726, 595, 138], ['Communipaw', 1037, 667, 198], ['Greenville', 571, 821, 142]].forEach(function (a) { label('town', a[0], a[1], a[2], a[3]); });
  [['JOURNAL', 1018, 240, 128], ['SQUARE', 1018, 271, 108], ['NEWPORT', 1386, 357, 134], ['EAST', 2065, 272, 66], ['VILLAGE', 2065, 303, 112], ['SOHO', 1906, 405, 74], ['LOWER', 2073, 518, 96], ['EAST SIDE', 2073, 549, 140], ['WHITEHALL', 1702, 724, 156], ['DUMBO', 2027, 774, 100], ['BROOKLYN', 2233, 816, 148], ['NAVY YARD', 2233, 847, 150], ['DOWNTOWN', 2028, 948, 180], ['BROOKLYN', 2028, 981, 162], ['CLINTON', 2374, 1001, 120], ['HILL', 2374, 1032, 58], ['SUNNYSIDE', 2791, 92, 160], ['ELMHU', 3562, 153, 96], ['GREENPOINT', 2574, 389, 178], ['MASPETH', 3110, 400, 132], ['WILLIAMSBURG', 2539, 557, 212], ['RIDGEWOOD', 3088, 679, 166], ['GLENDALE', 3471, 800, 146], ['BUSHWICK', 3026, 932, 148], ['BEDFORD–', 2710, 1117, 148], ['STUYVESANT', 2710, 1147, 176]].forEach(function (a) { label('hood', a[0], a[1], a[2], a[3]); });
  [['Whitney Museum', 1762, 135, 212], ['of American Art', 1762, 170, 194], ['Flatiron Building', 2033, 111, 206], ['Williamsburg Bridge', 2269, 612, 254], ['Statue of Liberty', 1266, 1065, 202]].forEach(function (a) { label('poi', a[0], a[1], a[2], a[3]); });
  label('edu', "St. Peter's University", 882, 357, 260);
  label('isle', 'Ellis Island', 1301, 892, 136);
  [['Jersey City', 1177, 581, 136], ['Medical Center', 1177, 615, 184], ['NYC Health +', 2688, 876, 162], ['Hospitals/Woodhull', 2688, 911, 242]].forEach(function (a) { label('med', a[0], a[1], a[2], a[3]); });
  label('city', 'Jersey City', 1225, 430, 252);
  label('city', 'New York', 1805, 593, 234);
  out.push('<text class="m-city" style="font-size:38px;fill:#444" x="1436" y="42" textLength="166" lengthAdjust="spacingAndGlyphs">Hoboken</text>');
  // poi glyphs
  out.push('<path d="M1172 529h8v9h9v8h-9v9h-8v-9h-9v-8h9zM2684 823h8v9h9v8h-9v9h-8v-9h-9v-8h9z" fill="#b8527e"/><path d="M868 313l13-6 13 6-13 6zM873 319l8 4 8-4v8h-16zM891 315h2v12h-2z" fill="#917822"/><path d="M1288 852q0-13 13-13t13 13q-2 5-11 3v10h-5v-10q-9 2-10-3z" fill="#3a8b2a"/>');
  [[2033, 71], [1266, 1025]].forEach(function (p) { out.push('<g transform="translate(' + p + ')"><path d="M-13-7h7l3-4h7l3 4h6v17h-26z" fill="#8b6a56"/><circle cy="1" r="5" fill="none" stroke="#fff" stroke-width="2.500"/></g>'); });
  out.push('<path d="M1752 92l11-7 11 7zM1753 94h4v10h-4zM1761 94h4v10h-4zM1769 94h4v10h-4zM1751 104h24v4h-24z" fill="#8b6a56"/><path d="M2258 578q10-14 22 0" fill="none" stroke="#9a7763" stroke-width="4"/>');
  [[1505, 183], [2490, 62], [2621, 51], [2205, 1110]].forEach(function (p) { out.push('<g transform="translate(' + p + ')"><rect x="-18" y="-18" width="36" height="36" fill="#4558c9"/><path d="M-8-11H8V6H-8zM-6 7l-3 6M6 7l3 6" fill="none" stroke="#fff" stroke-width="3"/><path d="M-8-1H8V7H-8z" fill="#fff"/></g>'); });
  // shields
  [[128, 195, '1-9'], [524, 184, '1-9'], [868, 112, '1-9'], [255, 234, '1', 1], [484, 315, '1', 1], [645, 362, '1', 1]].forEach(function (s) {
    var w = s[3] ? 21 : 29;
    out.push('<path transform="translate(' + s[0] + ' ' + s[1] + ')" d="M' + (-w + 5) + ' -20Q' + (-w / 2) + ' -14 0 -20Q' + w / 2 + ' -14 ' + (w - 5) + ' -20L' + w + ' -10Q' + (w - 6) + ' 2 ' + w + ' 12L' + (w - 9) + ' 18L0 21L' + (9 - w) + ' 18L' + -w + ' 12Q' + (6 - w) + ' 2 ' + -w + ' -10Z" fill="#fff" stroke="#444" stroke-width="3"/>');
    label('shield', s[2], s[0], s[1]);
    if (s[3]) label('tiny', 'TRUCK', s[0], s[1] - 35, 44);
  });
  [[769, 413, '605'], [799, 471, '501'], [466, 953, '501'], [2258, 254, 'FDR'], [2041, 640, 'FDR'], [3519, 973, 'JR']].forEach(function (s) {
    var w = s[2] === 'JR' ? 22 : 29;
    out.push('<rect x="' + (s[0] - w) + '" y="' + (s[1] - 16) + '" width="' + 2 * w + '" height="32" rx="4" fill="#fff" stroke="#555" stroke-width="3"/>');
    label('shield', s[2], s[0], s[1]);
  });
  [[479, 759, '440', 30], [376, 980, '440', 30], [1727, 380, '9A', 23], [3225, 60, '25', 22], [525, 1172, '', 22]].forEach(function (s) {
    out.push('<ellipse cx="' + s[0] + '" cy="' + s[1] + '" rx="' + s[3] + '" ry="22" fill="#fff" stroke="#444" stroke-width="3"/>');
    if (s[2]) label('shield', s[2], s[0], s[1]);
  });
  [[99, 857, '78', 22], [462, 1018, '78', 22], [718, 967, '78', 22], [1192, 235, '78', 22], [-6, 493, '95', 22], [2453, 745, '278', 29], [2838, 357, '278', 29], [2987, 184, '278', 29], [3332, 38, '278', 29], [3359, 356, '495', 29]].forEach(function (s) {
    var w = s[3];
    out.push('<g transform="translate(' + s[0] + ' ' + s[1] + ')"><path d="M' + -w + ' -8H' + w + 'Q' + w + ' 12 0 22Q' + -w + ' 12 ' + -w + ' -8Z" fill="#3f4fae"/><path d="M' + -w + ' -8L' + (2 - w) + ' -20L' + -w / 2 + ' -16L0 -20L' + w / 2 + ' -16L' + (w - 2) + ' -20L' + w + ' -8Z" fill="#d1333c"/></g>');
    out.push('<text class="m-shield" style="fill:#fff" x="' + s[0] + '" y="' + (s[1] + 10) + '">' + s[2] + '</text>');
  });
  // event pins
  [[456, 506], [439, 524], [481, 543]].forEach(function (p) { out.push('<g transform="translate(' + (p[0] + 1200) + ' ' + p[1] + ')" fill="none" stroke="#4f46e5" stroke-width="4.500"><path d="M0 23C-8 14-18 5-18-6A18 18 0 0 1 18-6C18 5 8 14 0 23Z"/><circle cy="-6" r="7"/></g>'); });
  label('ev', 'Local Artists Showcase', 1776, 551, 296);
  label('ev', 'Community Garden Workshop', 1805, 570, 386);
  label('ev', 'Youth Sports Day', 1768, 588, 222);
  // attribution and logo
  out.push('<rect x="2958" y="1110" width="652" height="48" fill="#fff" opacity=".5"/>');
  label('attr', '© Mapbox © OpenStreetMap', 3159, 1134, 372);
  out.push('<g style="font-weight:700">'); label('attr', 'Improve this map', 3478, 1134, 238); out.push('</g>');
  out.push('<circle cx="42" cy="1115" r="20" fill="#4c93a8" fill-opacity=".6" stroke="#fff" stroke-width="5"/><path d="M30 1128V1112a14 14 0 1 1 14 14z" fill="#fff"/><path d="M43 1103l3 7 7 3-7 3-3 7-3-7-7-3 7-3z" fill="#4c93a8"/>');
  out.push('<text x="147" y="1126" textLength="146" lengthAdjust="spacingAndGlyphs" style="font:600 36px Inter,sans-serif;fill:#fff;stroke:#4c93a8;stroke-width:6">mapbox</text>');
  document.getElementById('citymap').innerHTML = out.join('');
})();
</script>
</body>
</html>
